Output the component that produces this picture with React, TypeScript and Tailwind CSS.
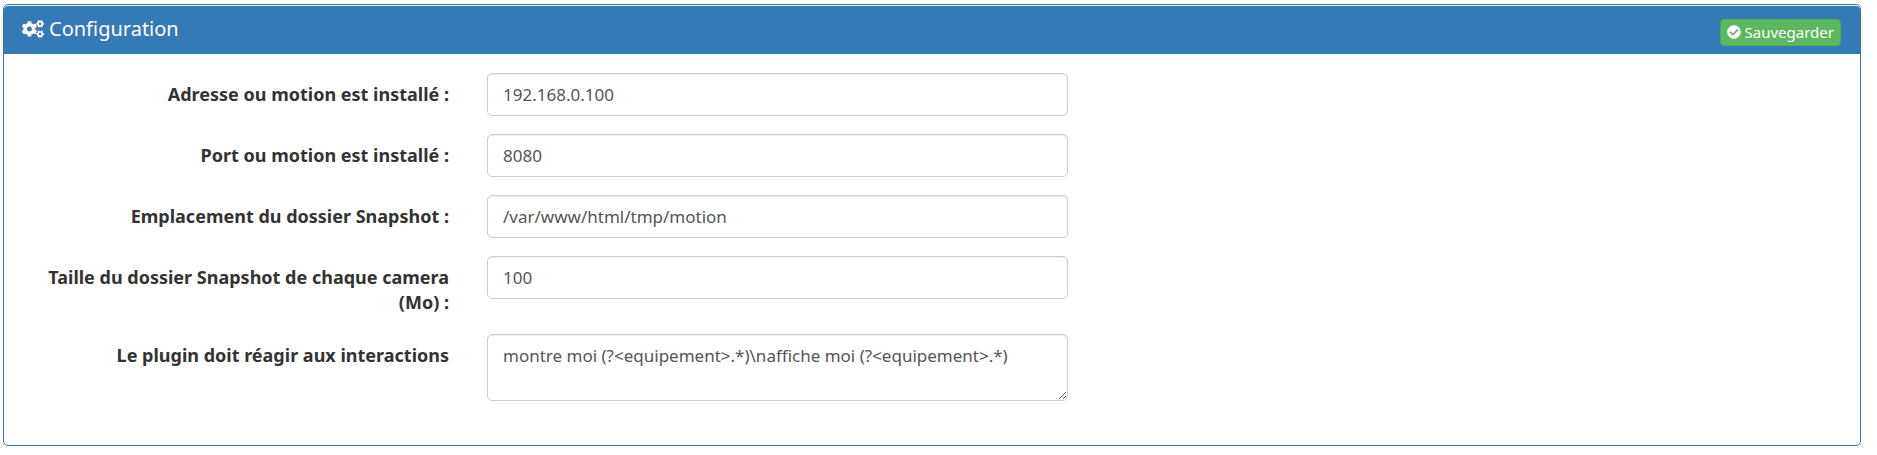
import { FaCogs, FaCheckCircle } from "react-icons/fa";

const fieldClass =
  "block w-full rounded-[5px] border border-[#cccccc] bg-white px-[15px] text-[17px] leading-[25px] text-[#555555] shadow-[inset_0_1px_1px_rgba(0,0,0,0.075)] outline-none focus:border-[#66afe9]";

const fields = [
  { id: "address", label: "Adresse ou motion est installé :", value: "192.168.0.100" },
  { id: "port", label: "Port ou motion est installé :", value: "8080" },
  { id: "snapshot-path", label: "Emplacement du dossier Snapshot :", value: "/var/www/html/tmp/motion" },
  { id: "snapshot-size", label: "Taille du dossier Snapshot de chaque camera (Mo) :", value: "100" },
  {
    id: "interactions",
    label: "Le plugin doit réagir aux interactions",
    value: "montre moi (?<equipement>.*)\\naffiche moi (?<equipement>.*)",
    multiline: true,
  },
];

export default function App() {
  return (
    <main className="bg-white pt-1 pr-4 pb-2 pl-[3px] font-['Noto_Sans',sans-serif] text-[#333333]">
      <section className="rounded-[5px] border border-[#3775aa] bg-white pt-px">
        <header className="flex h-12 items-center justify-between rounded-t-[4px] bg-[#337ab7] pr-[19px] pl-[18px] text-white">
          <h3 className="flex items-center gap-[5px] pb-[2px] text-[20px] leading-[22px]">
            <FaCogs className="size-[22px]" aria-hidden="true" />
            Configuration
          </h3>
          <button
            type="button"
            className="mt-1 flex h-[27px] items-center gap-1 rounded-[4px] border border-[#4cae4c] bg-[#5cb85c] px-[6px] text-[15px] leading-[22px] text-white"
          >
            <FaCheckCircle className="size-[14px]" aria-hidden="true" />
            Sauvegarder
          </button>
        </header>
        <form className="flex flex-col gap-[18px] pt-[19px] pb-11" onSubmit={(e) => e.preventDefault()}>
          {fields.map((field) => (
            <div key={field.id} className="grid grid-cols-12 items-start">
              <label
                htmlFor={field.id}
                className="col-span-3 px-[19px] pt-[9px] pb-px text-right text-[18px] leading-[25px] font-bold"
              >
                {field.label}
              </label>
              <div className="col-span-4 px-[19px]">
                {field.multiline ? (
                  <textarea id={field.id} defaultValue={field.value} className={`${fieldClass} h-[67px] resize py-2`} />
                ) : (
                  <input id={field.id} type="text" defaultValue={field.value} className={`${fieldClass} h-[43px]`} />
                )}
              </div>
            </div>
          ))}
        </form>
      </section>
    </main>
  );
}
